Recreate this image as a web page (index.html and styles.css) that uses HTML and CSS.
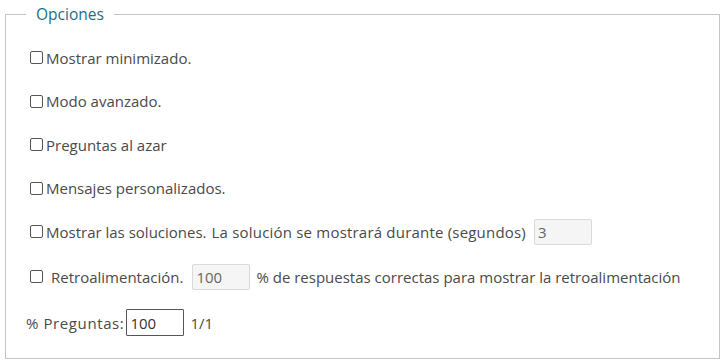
FILE: index.html
```html
<!DOCTYPE html>
<html lang="es">
<head>
<meta charset="utf-8">
<link rel="stylesheet" href="styles.css">
</head>
<body>
<fieldset class="options">
  <legend class="options-title">Opciones</legend>
  <div class="row"><span class="box"></span><span>Mostrar minimizado.</span></div>
  <div class="row"><span class="box"></span><span>Modo avanzado.</span></div>
  <div class="row"><span class="box"></span><span>Preguntas al azar</span></div>
  <div class="row"><span class="box"></span><span>Mensajes personalizados.</span></div>
  <div class="row"><span class="box"></span><span>Mostrar las soluciones.</span><span class="sp">La solución se mostrará durante (segundos)</span><span class="field disabled field-sec">3</span></div>
  <div class="row row-retro"><span class="box"></span><span class="retro-label">Retroalimentación.</span><span class="field disabled field-retro">100</span><span class="retro-text">% de respuestas correctas para mostrar la retroalimentación</span></div>
  <div class="row row-pct"><span class="pct-label">% Preguntas:</span><span class="field field-pct">100</span><span class="sp-m">1/1</span></div>
</fieldset>
</body>
</html>
```
FILE: styles.css
```css
html, body {
  margin: 0;
  padding: 0;
  background: #fff;
}
body {
  font-family: "Open Sans", "Noto Sans", sans-serif;
  font-size: 15px;
  color: #4a4a4a;
}
.options {
  margin: 4px 4px 0 5px;
  border: 1px solid #c4c4c4;
  padding: 12px 10px 12px 24px;
  display: flex;
  flex-direction: column;
}
.options-title {
  margin-left: -4px;
  padding: 0 10px;
  font-size: 15.5px;
  color: #1d6e88;
  line-height: 20px;
}
.row {
  height: 43.5px;
  flex: none;
  display: flex;
  align-items: center;
  white-space: nowrap;
}
.box {
  width: 11px;
  height: 11px;
  border: 1px solid #555;
  border-radius: 2px;
  margin-right: 3px;
  flex: none;
}
.sp { margin-left: 5px; letter-spacing: 0.2px; }
.sp-m { margin-left: 6px; }
.field {
  box-sizing: border-box;
  width: 58px;
  height: 26px;
  border-radius: 2px;
  padding: 3px 3px;
  display: inline-flex;
  align-items: center;
  margin-left: 5px;
}
.disabled {
  background: #f5f5f5;
  border: 1px solid #d9d9d9;
  color: #666;
}
.field-sec { margin-left: 8px; }
.retro-label { margin-left: 5px; }
.field-retro { margin-left: 9px; }
.retro-text { margin-left: 6px; }
.field-pct {
  border: 1px solid #555;
  background: #fff;
  color: #333;
  height: 27px;
  margin-left: 2px;
  border-radius: 1px;
}
.pct-label { letter-spacing: 0.6px; }
.row-retro { height: 46px; }
.row-pct { height: 46px; margin-left: -4px; }
```
